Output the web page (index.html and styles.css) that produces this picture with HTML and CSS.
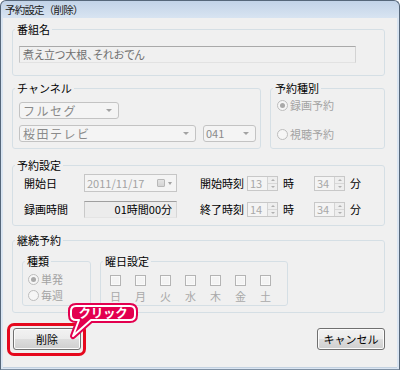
FILE: index.html
```html
<!DOCTYPE html>
<html lang="ja">
<head>
<meta charset="utf-8">
<title>予約設定（削除）</title>
<link rel="stylesheet" href="styles.css">
</head>
<body>
<div class="window">
  <div class="titlebar">予約設定（削除）</div>
  <div class="client">
    <fieldset class="group g-title">
      <legend>番組名</legend>
      <div class="body">
        <div class="textbox">煮え立つ大根、それおでん</div>
      </div>
    </fieldset>

    <div class="row2">
      <fieldset class="group g-channel">
        <legend>チャンネル</legend>
        <div class="body">
          <div class="select s1"><span>フルセグ</span><i class="arrow"></i></div>
          <div class="ch-row">
            <div class="select s2"><span>桜田テレビ</span><i class="arrow"></i></div>
            <div class="select s3"><span>041</span><i class="arrow"></i></div>
          </div>
        </div>
      </fieldset>
      <fieldset class="group g-type">
        <legend>予約種別</legend>
        <div class="body">
          <div class="radio"><span class="rb checked"></span><span>録画予約</span></div>
          <div class="radio"><span class="rb"></span><span>視聴予約</span></div>
        </div>
      </fieldset>
    </div>

    <fieldset class="group g-setting">
      <legend>予約設定</legend>
      <div class="body grid">
        <span class="lbl">開始日</span>
        <div class="datebox"><span>2011/11/17</span><i class="cal"></i><i class="arrow small"></i></div>
        <span class="lbl">開始時刻</span>
        <div class="spin"><span class="val">13</span><span class="spinbtn"><i class="up"></i><i class="down"></i></span></div>
        <span class="unit">時</span>
        <div class="spin"><span class="val">34</span><span class="spinbtn"><i class="up"></i><i class="down"></i></span></div>
        <span class="unit u2">分</span>

        <span class="lbl">録画時間</span>
        <div class="duration">01時間00分</div>
        <span class="lbl">終了時刻</span>
        <div class="spin"><span class="val">14</span><span class="spinbtn"><i class="up"></i><i class="down"></i></span></div>
        <span class="unit">時</span>
        <div class="spin"><span class="val">34</span><span class="spinbtn"><i class="up"></i><i class="down"></i></span></div>
        <span class="unit u2">分</span>
      </div>
    </fieldset>

    <fieldset class="group g-repeat">
      <legend>継続予約</legend>
      <div class="body sub">
        <fieldset class="group g-kind">
          <legend>種類</legend>
          <div class="body">
            <div class="radio"><span class="rb checked"></span><span>単発</span></div>
            <div class="radio"><span class="rb"></span><span>毎週</span></div>
          </div>
        </fieldset>
        <fieldset class="group g-days">
          <legend>曜日設定</legend>
          <div class="body days">
            <div class="day"><span class="cb"></span><span class="dl">日</span></div>
            <div class="day"><span class="cb"></span><span class="dl">月</span></div>
            <div class="day"><span class="cb"></span><span class="dl">火</span></div>
            <div class="day"><span class="cb"></span><span class="dl">水</span></div>
            <div class="day"><span class="cb"></span><span class="dl">木</span></div>
            <div class="day"><span class="cb"></span><span class="dl">金</span></div>
            <div class="day"><span class="cb"></span><span class="dl">土</span></div>
          </div>
        </fieldset>
      </div>
    </fieldset>

    <div class="buttons">
      <button class="btn">削除</button>
      <button class="btn">キャンセル</button>
      <div class="highlight"></div>
      <div class="callout">
        <svg width="80" height="46" viewBox="0 0 80 46">
          <path class="co-outer" d="M12,8 H66 Q71,8 71,13 V17 Q71,22 66,22 H27 L9,38 L15,22 H12 Q7,22 7,17 V13 Q7,8 12,8 Z"/>
          <path class="co-inner" d="M12,8 H66 Q71,8 71,13 V17 Q71,22 66,22 H27 L9,38 L15,22 H12 Q7,22 7,17 V13 Q7,8 12,8 Z"/>
        </svg>
        <span class="callout-text">クリック</span>
      </div>
    </div>
  </div>
</div>
</body>
</html>
```

FILE: styles.css
```css
* { box-sizing: border-box; }
html, body { margin: 0; padding: 0; }
body {
  width: 400px;
  height: 370px;
  overflow: hidden;
  background: #ffffff;
  font-family: "Noto Sans CJK JP", "Noto Sans", sans-serif;
  font-size: 11px;
  color: #000;
}

.window {
  width: 400px;
  height: 370px;
  border: 1px solid #56677a;
  border-bottom-color: #7f90a3;
  border-radius: 6px 6px 0 0;
  background: linear-gradient(to bottom, #c2d3e8 0, #d8e4f1 17px, #dbe6f3 100%);
  display: flex;
  flex-direction: column;
  overflow: hidden;
}

.titlebar {
  height: 17px;
  padding-left: 4px;
  font-size: 10.5px;
  letter-spacing: -0.8px;
  line-height: 17px;
  color: #1b1b1b;
  white-space: nowrap;
}

.client {
  flex: 1;
  margin: 0 2px 1px;
  background: #f0f0f0;
  padding: 4px 12px 0 9px;
  border-bottom: 1px solid #c4d2e1;
}

/* group boxes */
.group {
  margin: 0;
  padding: 0;
  min-width: 0;
  border: 1px solid #d5dfe5;
  border-radius: 3px;
}
.group legend {
  padding: 0 2px;
  margin-left: 2px;
  font-size: 11px;
  line-height: 14px;
  color: #000;
}

.g-title .body { padding: 10px 0 12px 6px; }
.textbox {
  width: 337px;
  height: 17px;
  border: 1px solid;
  border-color: #a9a9a9 #d3d3d3 #e2e2e2 #c6c6c6;
  background: #f0f0f0;
  color: #6f6f6f;
  font-feature-settings: "palt";
  line-height: 15px;
  padding-left: 3px;
  white-space: nowrap;
}

.row2 {
  display: flex;
  gap: 9px;
  margin-top: 5px;
}
.g-channel { width: 249px; }
.g-type { width: 115px; }
.g-channel .body { padding: 7px 0 6px 6px; display: flex; flex-direction: column; gap: 6px; }
.ch-row { display: flex; gap: 7px; }

.select {
  height: 17px;
  display: flex;
  align-items: center;
  justify-content: space-between;
  border: 1px solid #c3c3c3;
  border-radius: 3px;
  background: #f4f4f4;
  color: #8a8a8a;
  font-size: 12px;
  letter-spacing: 1.5px;
  line-height: 15px;
  padding: 0 6px 0 3px;
  white-space: nowrap;
}
.s1 { width: 100px; }
.s2 { width: 177px; }
.s3 { width: 53px; font-size: 11px; letter-spacing: 0; padding-left: 2px; }
.arrow {
  display: block;
  width: 0;
  height: 0;
  border-left: 3px solid transparent;
  border-right: 3px solid transparent;
  border-top: 3px solid #a2a2a2;
}

.g-type .body { padding: 3px 0 0 6px; display: flex; flex-direction: column; gap: 15px; }
.radio {
  display: flex;
  align-items: center;
  gap: 2px;
  height: 14px;
  line-height: 14px;
  color: #a3a3a3;
}
.rb {
  width: 11px;
  height: 11px;
  border-radius: 50%;
  border: 1px solid #bdbdbd;
  background: #f6f6f6;
  display: flex;
  align-items: center;
  justify-content: center;
}
.rb.checked::after {
  content: "";
  width: 5px;
  height: 5px;
  border-radius: 50%;
  background: #a9a9a9;
}

/* reservation settings */
.g-setting { margin-top: 9px; }
.grid {
  display: grid;
  grid-template-columns: 60px 116px 47px 31px 36px 32px auto;
  grid-template-rows: 18px 18px;
  row-gap: 8px;
  align-items: center;
  padding: 2px 0 7px 11px;
}
.lbl { white-space: nowrap; line-height: 14px; }
.unit { padding-left: 5px; line-height: 14px; }
.unit.u2 { padding-left: 4px; }

.datebox {
  width: 93px;
  height: 18px;
  display: flex;
  align-items: center;
  border: 1px solid #c6c6c6;
  background: #f4f4f4;
  color: #a3a3a3;
  padding: 0 4px 0 2px;
  font-size: 11px;
}
.datebox span { flex: 1; }
.cal {
  display: block;
  width: 8px;
  height: 8px;
  border: 1px solid #b8b8b8;
  background: linear-gradient(#e4e4e4, #d4d4d4);
  border-radius: 1px;
  margin-right: 3px;
}
.arrow.small { border-left-width: 2.5px; border-right-width: 2.5px; }

.duration {
  width: 93px;
  height: 17px;
  border: 1px solid;
  border-color: #9f9f9f #d6d6d6 #e4e4e4 #c9c9c9;
  background: #ececec;
  text-align: right;
  padding-right: 4px;
  line-height: 15px;
  font-size: 11px;
}

.spin {
  width: 31px;
  height: 15px;
  display: flex;
  border: 1px solid #c8c8c8;
  background: #f4f4f4;
  color: #a8a8a8;
}
.spin .val { flex: 1; padding-left: 2px; line-height: 13px; font-size: 11px; }
.spinbtn {
  width: 10px;
  display: flex;
  flex-direction: column;
  border-left: 1px solid #d4d4d4;
  background: #eeeeee;
}
.spinbtn i {
  flex: 1;
  display: flex;
  align-items: center;
  justify-content: center;
}
.spinbtn i.up { border-bottom: 1px solid #d8d8d8; }
.spinbtn i.up::after {
  content: "";
  border-left: 2px solid transparent;
  border-right: 2px solid transparent;
  border-bottom: 2px solid #b0b0b0;
}
.spinbtn i.down::after {
  content: "";
  border-left: 2px solid transparent;
  border-right: 2px solid transparent;
  border-top: 2px solid #b0b0b0;
}

/* repeat */
.g-repeat { margin-top: 7px; }
.sub { display: flex; gap: 9px; padding: 7px 0 6px 9px; }
.g-kind { width: 69px; }
.g-days { width: 188px; }
.g-kind .body { padding: 4px 0 3px 5px; display: flex; flex-direction: column; gap: 2px; }
.days { display: flex; gap: 14px; padding: 7px 0 2px 9px; }
.day { width: 11px; display: flex; flex-direction: column; align-items: center; gap: 3px; }
.cb {
  width: 11px;
  height: 11px;
  border: 1px solid #b4b4b4;
  background: #f4f4f4;
  box-shadow: inset 0 0 0 1px #fafafa;
}
.dl { line-height: 14px; color: #a9a9a9; white-space: nowrap; }

/* buttons */
.buttons {
  position: relative;
  display: flex;
  justify-content: space-between;
  margin-top: 15px;
  padding-left: 1px;
}
.btn {
  width: 68px;
  height: 22px;
  border: 1px solid #707070;
  border-radius: 3px;
  background: linear-gradient(to bottom, #f2f2f2 0%, #ebebeb 50%, #dddddd 51%, #cfcfcf 100%);
  box-shadow: inset 0 0 0 1px #fcfcfc;
  font-family: "Noto Sans CJK JP", sans-serif;
  font-size: 11px;
  color: #000;
  padding: 0;
  line-height: 18px;
}

.highlight {
  position: absolute;
  left: -5px;
  top: -5px;
  width: 79px;
  height: 33px;
  border: 3px solid #e6081d;
  border-radius: 7px;
}

.callout {
  position: absolute;
  left: 52px;
  top: -30px;
  width: 80px;
  height: 46px;
}
.callout svg { display: block; }
.co-outer { fill: #e3004f; stroke: #e3004f; stroke-width: 6; stroke-linejoin: round; }
.co-inner { fill: #e3004f; stroke: #ffffff; stroke-width: 2; stroke-linejoin: round; }
.callout-text {
  position: absolute;
  left: 7px;
  top: 8px;
  width: 64px;
  height: 14px;
  line-height: 14px;
  text-align: center;
  color: #ffffff;
  font-weight: 700;
  font-size: 12.5px;
  letter-spacing: -0.3px;
  white-space: nowrap;
}
```
